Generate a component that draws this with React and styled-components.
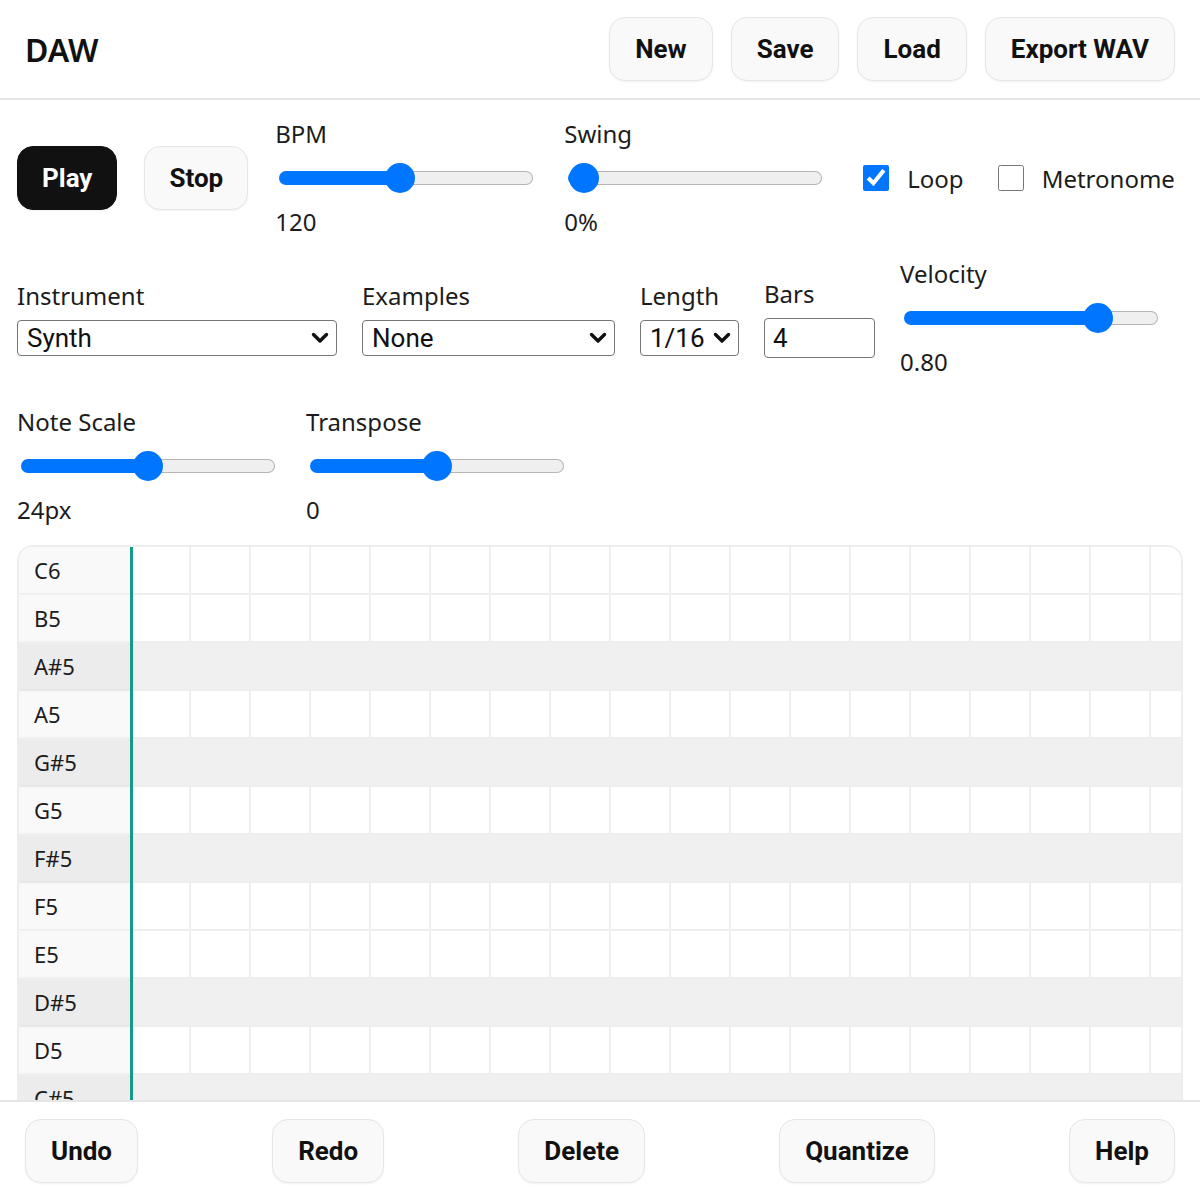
import React, { useState } from 'react';
import styled, { createGlobalStyle } from 'styled-components';

const GlobalStyle = createGlobalStyle`
    * { box-sizing: border-box; }
    html, body { margin: 0; padding: 0; background: #fff; }
    body {
        font-family: "Noto Sans", "Open Sans", sans-serif;
        color: #1c1c1c;
    }
`;

const Page = styled.div`
    height: 100vh;
    display: flex;
    flex-direction: column;
    overflow: hidden;
`;

const Header = styled.header`
    display: flex;
    align-items: center;
    justify-content: space-between;
    padding: 17px 25px;
    border-bottom: 2px solid #e6e6e6;
`;

const Title = styled.h1`
    margin: 0;
    font-size: 32px;
    font-weight: 600;
    color: #111;
`;

const ButtonRow = styled.div`
    display: flex;
    gap: ${(p) => p.$gap || 18}px;
    align-items: center;
    margin-left: ${(p) => p.$ml || 0}px;
`;

const Button = styled.button`
    height: 64px;
    padding: 0 ${(p) => p.$pad || 25}px;
    font-family: Roboto, "Liberation Sans", sans-serif;
    font-size: 26px;
    font-weight: 700;
    border-radius: 16px;
    border: 1px solid ${(p) => (p.$dark ? '#111' : '#e6e6e6')};
    background: ${(p) => (p.$dark ? '#111' : '#f9f9f9')};
    color: ${(p) => (p.$dark ? '#fff' : '#111')};
    box-shadow: 0 1px 2px rgba(0, 0, 0, 0.05);
    cursor: pointer;
`;

const Controls = styled.section`
    display: flex;
    flex-direction: column;
    gap: 22px;
    padding: 19px 17px 20px;
`;

const Row = styled.div`
    display: flex;
    align-items: center;
    gap: ${(p) => p.$gap || 27}px;
    margin-top: ${(p) => p.$mt || 0}px;
`;

const Group = styled.div`
    display: flex;
    flex-direction: column;
    gap: ${(p) => p.$gap || 8}px;
`;

const Label = styled.span`
    font-size: 24px;
    line-height: 30px;
`;

const Range = styled.input`
    -webkit-appearance: none;
    appearance: none;
    width: 254px;
    height: 30px;
    margin: 6px 4px;
    background: transparent;
    &::-webkit-slider-runnable-track {
        height: 14px;
        border-radius: 7px;
        border: 1px solid transparent;
        background:
            linear-gradient(to right, #0075ff var(--fill), transparent var(--fill)) border-box,
            linear-gradient(#efefef, #efefef) padding-box,
            linear-gradient(#b5b5b5, #b5b5b5) border-box;
        background-origin: border-box;
    }
    &::-webkit-slider-thumb {
        -webkit-appearance: none;
        width: 30px;
        height: 30px;
        margin-top: -9px;
        border-radius: 50%;
        background: #0075ff;
        border: none;
    }
`;

const Check = styled.label`
    display: flex;
    align-items: center;
    gap: 15px;
    font-size: 24px;
    input {
        width: 26px;
        height: 26px;
        margin: 3px 3px 3px 4px;
        accent-color: #0075ff;
    }
`;

const SelectBox = styled.div`
    position: relative;
    width: ${(p) => p.$w}px;
    svg {
        position: absolute;
        right: 8px;
        top: 12px;
        pointer-events: none;
    }
`;

const Select = styled.select`
    -webkit-appearance: none;
    appearance: none;
    width: 100%;
    height: 36px;
    padding: 0 30px 0 9px;
    font-family: Roboto, "Liberation Sans", sans-serif;
    font-size: 26px;
    color: #111;
    background: #fff;
    border: 1px solid #767676;
    border-radius: 4px;
`;

const NumberInput = styled.input`
    width: 111px;
    height: 40px;
    padding: 0 8px;
    font-family: Roboto, "Liberation Sans", sans-serif;
    font-size: 26px;
    color: #111;
    border: 1px solid #767676;
    border-radius: 4px;
`;

const GridWrap = styled.div`
    flex: 1;
    min-height: 0;
    overflow: hidden;
    padding: 0 17px;
`;

const Grid = styled.div`
    position: relative;
    border: 2px solid #ededed;
    border-radius: 16px;
    overflow: hidden;
`;

const NoteRow = styled.div`
    display: flex;
    height: 48px;
`;

const KeyCell = styled.div`
    width: 112px;
    flex-shrink: 0;
    display: flex;
    align-items: center;
    padding-left: 15px;
    font-size: 22px;
    color: #1c1c1c;
    background: ${(p) => (p.$black ? '#ececec' : '#f9f9f9')};
    border-bottom: 2px solid ${(p) => (p.$black ? '#e8e8e8' : '#f0f0f0')};
`;

const Lane = styled.div`
    flex: 1;
    border-bottom: 2px solid #eeeeee;
    background: ${(p) =>
        p.$black
            ? '#f0f0f0'
            : 'repeating-linear-gradient(to right, #fff 0 58px, #efefef 58px 60px)'};
`;

const Playhead = styled.div`
    position: absolute;
    top: 0;
    bottom: 0;
    left: 111px;
    width: 3px;
    background: #149a8b;
`;

const Footer = styled.footer`
    display: flex;
    justify-content: space-between;
    align-items: center;
    padding: 17px 25px;
    border-top: 2px solid #e6e6e6;
    background: #fff;
`;

// one octave of piano-roll rows, top to bottom
const notes = ['C6', 'B5', 'A#5', 'A5', 'G#5', 'G5', 'F#5', 'F5', 'E5', 'D#5', 'D5', 'C#5'];

function Slider({ label, min, max, step, value, onChange, format }) {
    const frac = (value - min) / (max - min);
    const fill = 15 + frac * (254 - 30);
    return (
        <Group>
            <Label>{label}</Label>
            <Range
                type="range"
                min={min}
                max={max}
                step={step}
                value={value}
                onChange={(e) => onChange(Number(e.target.value))}
                style={{ '--fill': `${fill}px` }}
            />
            <Label>{format ? format(value) : value}</Label>
        </Group>
    );
}

function Chevron() {
    return (
        <svg width="18" height="12" viewBox="0 0 18 12">
            <path d="M2.5 2.5 L9 9 L15.5 2.5" fill="none" stroke="#111" strokeWidth="3.4" strokeLinecap="round" strokeLinejoin="round" />
        </svg>
    );
}

export default function App() {
    const [bpm, setBpm] = useState(120);
    const [swing, setSwing] = useState(0);
    const [velocity, setVelocity] = useState(0.8);
    const [scale, setScale] = useState(24);
    const [transpose, setTranspose] = useState(0);
    const [loop, setLoop] = useState(true);
    const [metro, setMetro] = useState(false);
    const [bars, setBars] = useState(4);

    return (
        <>
            <GlobalStyle />
            <Page>
                <Header>
                    <Title>DAW</Title>
                    <ButtonRow>
                        <Button>New</Button>
                        <Button>Save</Button>
                        <Button>Load</Button>
                        <Button>Export WAV</Button>
                    </ButtonRow>
                </Header>

                <Controls>
                    <Row $gap={27}>
                        <Button $dark $pad={24}>Play</Button>
                        <Button $pad={24}>Stop</Button>
                        <Slider label="BPM" min={40} max={210} step={1} value={bpm} onChange={setBpm} />
                        <Slider label="Swing" min={0} max={100} step={1} value={swing} onChange={setSwing} format={(v) => `${v}%`} />
                        <ButtonRow $gap={30} $ml={6}>
                            <Check>
                                <input type="checkbox" checked={loop} onChange={(e) => setLoop(e.target.checked)} />
                                Loop
                            </Check>
                            <Check>
                                <input type="checkbox" checked={metro} onChange={(e) => setMetro(e.target.checked)} />
                                Metronome
                            </Check>
                        </ButtonRow>
                    </Row>

                    <Row $gap={25}>
                        <Group $gap={9}>
                            <Label>Instrument</Label>
                            <SelectBox $w={320}>
                                <Select defaultValue="synth">
                                    <option value="synth">Synth</option>
                                    <option value="piano">Piano</option>
                                    <option value="bass">Bass</option>
                                </Select>
                                <Chevron />
                            </SelectBox>
                        </Group>
                        <Group $gap={9}>
                            <Label>Examples</Label>
                            <SelectBox $w={253}>
                                <Select defaultValue="none">
                                    <option value="none">None</option>
                                    <option value="arp">Arpeggio</option>
                                </Select>
                                <Chevron />
                            </SelectBox>
                        </Group>
                        <Group $gap={9}>
                            <Label>Length</Label>
                            <SelectBox $w={99}>
                                <Select defaultValue="16">
                                    <option value="4">1/4</option>
                                    <option value="8">1/8</option>
                                    <option value="16">1/16</option>
                                </Select>
                                <Chevron />
                            </SelectBox>
                        </Group>
                        <Group $gap={9}>
                            <Label>Bars</Label>
                            <NumberInput type="text" value={bars} onChange={(e) => setBars(e.target.value)} />
                        </Group>
                        <Slider label="Velocity" min={0} max={1} step={0.01} value={velocity} onChange={setVelocity} format={(v) => v.toFixed(2)} />
                    </Row>

                    <Row $mt={8}>
                        <Slider label="Note Scale" min={8} max={40} step={1} value={scale} onChange={setScale} format={(v) => `${v}px`} />
                        <Slider label="Transpose" min={-12} max={12} step={1} value={transpose} onChange={setTranspose} />
                    </Row>
                </Controls>

                <GridWrap>
                    <Grid>
                        {notes.map((n) => {
                            const black = n.includes('#');
                            return (
                                <NoteRow key={n}>
                                    <KeyCell $black={black}>{n}</KeyCell>
                                    <Lane $black={black} />
                                </NoteRow>
                            );
                        })}
                        <Playhead />
                    </Grid>
                </GridWrap>

                <Footer>
                    <Button>Undo</Button>
                    <Button>Redo</Button>
                    <Button>Delete</Button>
                    <Button>Quantize</Button>
                    <Button>Help</Button>
                </Footer>
            </Page>
        </>
    );
}
